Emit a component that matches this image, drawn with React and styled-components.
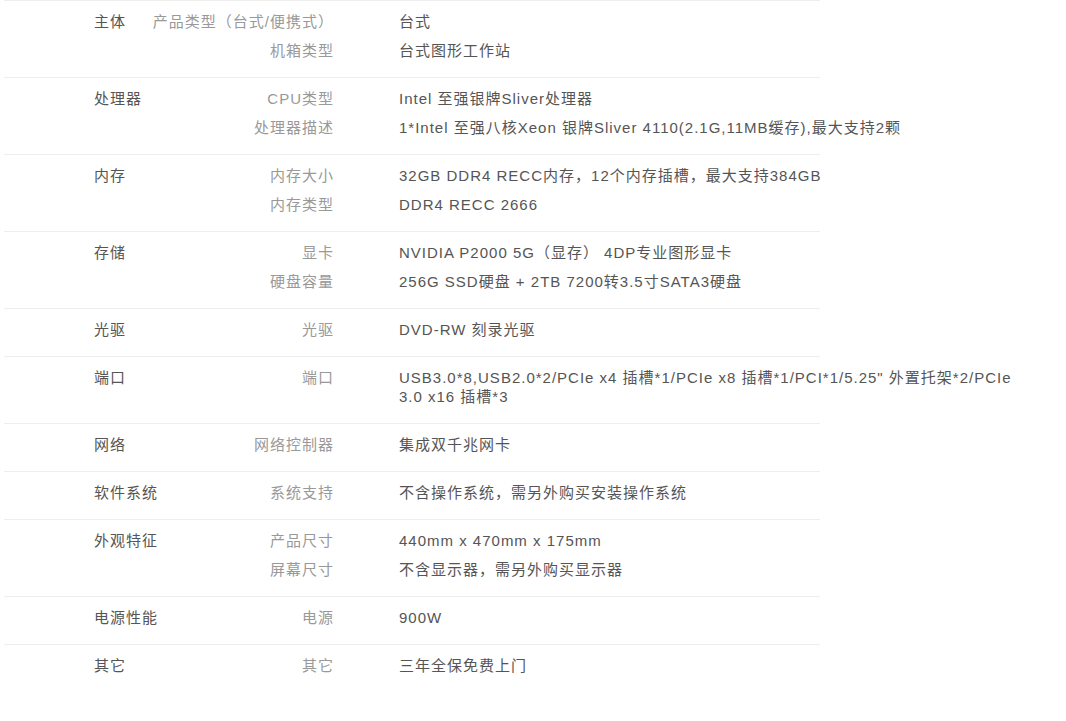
import React from "react";
import styled, { createGlobalStyle } from "styled-components";

const Global = createGlobalStyle`
  html, body { margin: 0; padding: 0; background: #fff; }
  body {
    font-family: "Liberation Sans", Arial, "Noto Sans CJK SC", sans-serif;
    font-size: 15px;
    letter-spacing: 1px;
  }
`;

const Table = styled.div`
  padding-left: 4px;
  width: 816px;
`;

const Row = styled.div`
  display: flex;
  border-top: 1px solid #eeeeee;
  padding: 11px 0 17px 90px;
  line-height: 19px;
`;

const Category = styled.div`
  width: 100px;
  flex: none;
  color: #555;
`;

const LabelCol = styled.div`
  display: flex;
  flex-direction: column;
  gap: 10px;
  width: 140px;
  flex: none;
  align-items: flex-end;
  color: #999;
  white-space: nowrap;
`;

const ValueCol = styled.div`
  display: flex;
  flex-direction: column;
  gap: 10px;
  margin-left: 65px;
  width: 622px;
  flex: none;
  color: #555;
`;

const data = [
  ["主体", [["产品类型（台式/便携式）", "台式"], ["机箱类型", "台式图形工作站"]]],
  ["处理器", [["CPU类型", "Intel 至强银牌Sliver处理器"], ["处理器描述", "1*Intel 至强八核Xeon 银牌Sliver 4110(2.1G,11MB缓存),最大支持2颗"]]],
  ["内存", [["内存大小", "32GB DDR4 RECC内存，12个内存插槽，最大支持384GB"], ["内存类型", "DDR4 RECC 2666"]]],
  ["存储", [["显卡", "NVIDIA P2000 5G（显存） 4DP专业图形显卡"], ["硬盘容量", "256G SSD硬盘 + 2TB 7200转3.5寸SATA3硬盘"]]],
  ["光驱", [["光驱", "DVD-RW 刻录光驱"]]],
  ["端口", [["端口", "USB3.0*8,USB2.0*2/PCIe x4 插槽*1/PCIe x8 插槽*1/PCI*1/5.25\" 外置托架*2/PCIe 3.0 x16 插槽*3"]]],
  ["网络", [["网络控制器", "集成双千兆网卡"]]],
  ["软件系统", [["系统支持", "不含操作系统，需另外购买安装操作系统"]]],
  ["外观特征", [["产品尺寸", "440mm x 470mm x 175mm"], ["屏幕尺寸", "不含显示器，需另外购买显示器"]]],
  ["电源性能", [["电源", "900W"]]],
  ["其它", [["其它", "三年全保免费上门"]]],
];

export default function App() {
  return (
    <>
      <Global />
      <Table>
        {data.map(([cat, items]) => (
          <Row key={cat}>
            <Category>{cat}</Category>
            <LabelCol>
              {items.map(([l]) => (
                <div key={l}>{l}</div>
              ))}
            </LabelCol>
            <ValueCol>
              {items.map(([l, v]) => (
                <div key={l}>{v}</div>
              ))}
            </ValueCol>
          </Row>
        ))}
      </Table>
    </>
  );
}
